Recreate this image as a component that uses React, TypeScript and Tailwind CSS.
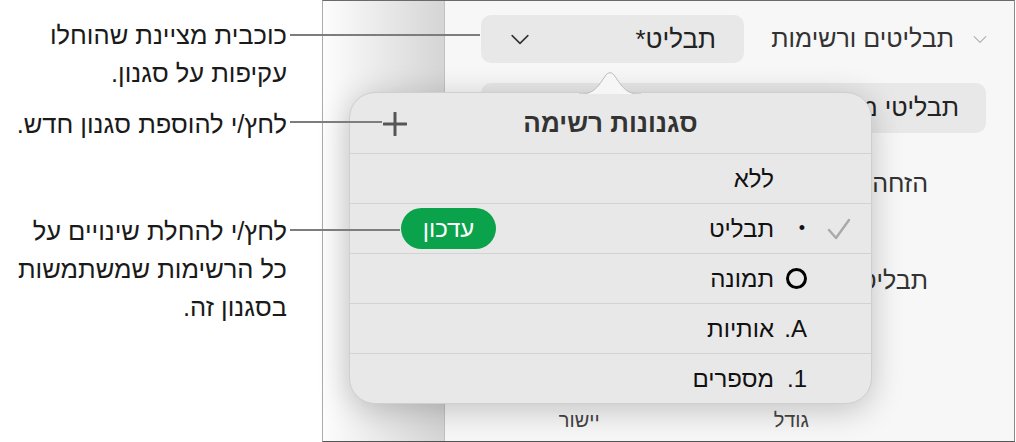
import type { ReactNode } from 'react';

const FONT = "font-['Liberation_Sans','DejaVu_Sans',sans-serif]";

const Chevron = ({ className }: { className: string }) => (
    <svg viewBox="0 0 24 14" className={className} fill="none" stroke="currentColor" strokeWidth={2} strokeLinecap="round" strokeLinejoin="round">
        <path d="M2 2l10 10L22 2" />
    </svg>
);

const Check = () => (
    <svg viewBox="0 0 24 24" className="h-[24px] w-[24px] text-[#a9a9a9]" fill="none" stroke="currentColor" strokeWidth={2.4} strokeLinecap="round" strokeLinejoin="round">
        <path d="M2 13l7 8L22 3" />
    </svg>
);

const Plus = () => (
    <svg viewBox="0 0 24 24" className="h-[24px] w-[24px] text-[#555]" fill="none" stroke="currentColor" strokeWidth={3} strokeLinecap="round">
        <path d="M12 1v22M1 12h22" />
    </svg>
);

type StyleRow = { label: string; marker?: ReactNode; selected?: boolean; update?: boolean };

const STYLES: StyleRow[] = [
    { label: 'ללא' },
    { label: 'תבליט', marker: <span className="pr-[2px] text-[18px]">•</span>, selected: true, update: true },
    { label: 'תמונה', marker: <span className="block h-[21px] w-[21px] rounded-full border-[3px] border-black" /> },
    { label: 'אותיות', marker: <span>A.</span> },
    { label: 'מספרים', marker: <span>1.</span> },
];

const Annotation = ({ lines, className }: { lines: string[]; className: string }) => (
    <div className={className}>
        {lines.map((line) => (
            <p key={line} className="leading-[38px]">
                {line}
            </p>
        ))}
    </div>
);

export default function App() {
    return (
        <div className={`relative flex h-[442px] w-[1016px] overflow-hidden bg-white ${FONT}`}>
            {/* callout texts */}
            <div dir="rtl" className="w-[322px] pr-[35px] pt-[16px] text-[25.5px] text-[#1a1a1a]">
                <Annotation lines={['כוכבית מציינת שהוחלו', 'עקיפות על סגנון.']} className="" />
                <Annotation lines={['לחץ/י להוספת סגנון חדש.']} className="mt-[13px]" />
                <Annotation
                    lines={['לחץ/י להחלת שינויים על', 'כל הרשימות שמשתמשות', 'בסגנון זה.']}
                    className="mt-[69px]"
                />
            </div>

            {/* app window */}
            <div className="flex h-[442px] w-[693px] border-t border-r border-b border-l border-t-[#6a6a6a] border-r-[#8a8a8a] border-b-[#555] border-l-[#ababab]">
                <div className="w-[122px] border-r border-[#c2c2c2] bg-linear-to-r from-[#fdfdfd] to-[#d5d5d5]" />
                <div dir="rtl" className="flex flex-1 flex-col bg-[#f7f7f7]">
                    <div className="mt-[14px] flex h-[48px] items-center pr-[27px]">
                        <Chevron className="h-[9px] w-[14px] text-[#b0b0b0]" />
                        <span className="w-[229px] pr-[19px] text-[25px] text-[#333]">תבליטים ורשימות</span>
                        <div className="flex h-[48px] w-[263px] items-center justify-between rounded-[10px] bg-[#e8e8e8] px-[28px] text-[26px] text-[#222]">
                            <span>תבליט*</span>
                            <Chevron className="h-[11px] w-[22px] text-[#333]" />
                        </div>
                    </div>
                    <div className="mr-[28px] mt-[20px] flex h-[50px] w-[505px] items-center rounded-[10px] bg-[#e8e8e8] pr-[27px] text-[25px] text-[#222]">
                        תבליטי מספרים
                    </div>
                    <div className="mt-[37px] pr-[86px] text-[25px] leading-[26px] text-[#333]">הזחה</div>
                    <div className="mt-[71px] pr-[86px] text-[25px] leading-[26px] text-[#333]">תבליט ותמונה</div>
                    <div className="mt-auto mb-[10px] flex pr-[205px] text-[20px] leading-[22px] text-[#444]">
                        <span>גודל</span>
                        <span className="mr-[174px]">יישור</span>
                    </div>
                </div>
            </div>

            {/* list styles popover */}
            <div dir="rtl" className="absolute left-[349px] top-[92px] w-[523px] rounded-[26px] border border-[#cfcfcf] bg-[#e8e8e8] shadow-[0_6px_32px_rgba(0,0,0,0.22)]">
                <svg viewBox="0 0 62 24" className="absolute -top-[22px] left-[229px] h-[24px] w-[62px]">
                    <path d="M0 23 C10 23 14 21 20 14 L27 4 C29 1 33 1 35 4 L42 14 C48 21 52 23 62 23" fill="#f6f6f6" stroke="#bdbdbd" strokeWidth={1} />
                    <rect x="0" y="23" width="62" height="2" fill="#e8e8e8" />
                </svg>
                <div className="relative flex h-[60px] items-center justify-center">
                    <span className="text-[26px] font-bold text-[#333]">סגנונות רשימה</span>
                    <span className="absolute left-[33px] top-[19px]">
                        <Plus />
                    </span>
                </div>
                {STYLES.map((row) => (
                    <div key={row.label} className="flex h-[50px] items-center border-t border-[#d2d2d2] pr-[20px] text-[24px] text-[#111]">
                        <span className="flex w-[24px] justify-center">{row.selected ? <Check /> : null}</span>
                        <span className="mr-[20px] flex w-[25px] items-center justify-start">{row.marker}</span>
                        <span className="mr-[8px]">{row.label}</span>
                        {row.update ? (
                            <span className="ml-[51px] mr-auto flex h-[41px] w-[95px] items-center justify-center rounded-full bg-[#0aa34b] text-[24px] text-white">
                                עדכון
                            </span>
                        ) : null}
                    </div>
                ))}
            </div>

            {/* callout leader lines */}
            <div className="absolute left-[290px] top-[34px] h-[2px] w-[190px] bg-[#7d7d7d]" />
            <div className="absolute left-[290px] top-[121px] h-[2px] w-[92px] bg-[#7d7d7d]" />
            <div className="absolute left-[290px] top-[229px] h-[2px] w-[110px] bg-[#7d7d7d]" />
        </div>
    );
}
